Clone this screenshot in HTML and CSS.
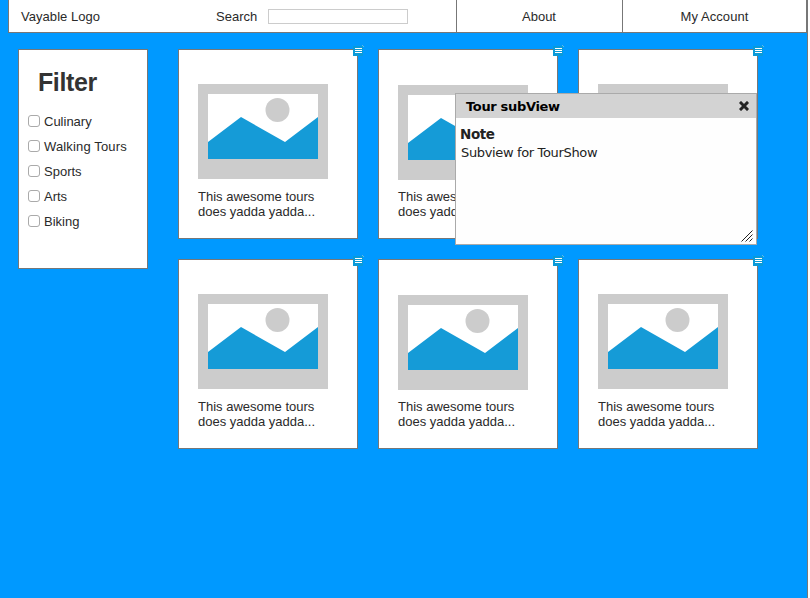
FILE: index.html
```html
<!DOCTYPE html>
<html lang="en">
<head>
<meta charset="utf-8">
<title>Vayable</title>
<link rel="stylesheet" href="styles.css">
</head>
<body>
<svg class="defs" width="0" height="0" aria-hidden="true">
  <symbol id="picture" viewBox="0 0 130 95">
    <path fill="#ccc" d="M0 0h130v95H0z"/>
    <path fill="#fff" d="M10 10h110v65H10z"/>
    <circle cx="79.5" cy="26" r="12" fill="#ccc"/>
    <path fill="#159bd7" d="M10 58 43 33 87 58 120 33V75H10z"/>
  </symbol>
  <symbol id="note" viewBox="0 0 11 11">
    <path fill="#0a9bd8" d="M0 1h9l1 1v9H0z"/>
    <path fill="#5bbce8" d="M9 0h1v1H9zM10 1h1v1h-1z"/>
    <path fill="#fff" d="M2 3h7v1H2zM2 5h7v1H2zM2 7h7v1H2z"/>
  </symbol>
</svg>
<div class="page">
  <header class="topbar">
    <div class="main">
      <span class="logo">Vayable Logo</span>
      <label class="search">Search <input type="text" class="search-box"></label>
    </div>
    <a class="about">About</a>
    <a class="account">My Account</a>
  </header>
  <div class="content">
    <aside class="filter">
      <h1>Filter</h1>
      <label><input type="checkbox">Culinary</label>
      <label><input type="checkbox"><span class="wide">Walking Tours</span></label>
      <label><input type="checkbox">Sports</label>
      <label><input type="checkbox">Arts</label>
      <label><input type="checkbox">Biking</label>
    </aside>
    <main class="tours">
      <article class="card"><svg class="badge"><use href="#note"/></svg><svg class="pic"><use href="#picture"/></svg><p>This awesome tours<br>does yadda yadda...</p></article>
      <article class="card mid"><svg class="badge"><use href="#note"/></svg><svg class="pic"><use href="#picture"/></svg><p>This awesome tours<br>does yadda yadda...</p></article>
      <article class="card"><svg class="badge"><use href="#note"/></svg><svg class="pic"><use href="#picture"/></svg><p>This awesome tours<br>does yadda yadda...</p></article>
      <article class="card"><svg class="badge"><use href="#note"/></svg><svg class="pic"><use href="#picture"/></svg><p>This awesome tours<br>does yadda yadda...</p></article>
      <article class="card mid"><svg class="badge"><use href="#note"/></svg><svg class="pic"><use href="#picture"/></svg><p>This awesome tours<br>does yadda yadda...</p></article>
      <article class="card"><svg class="badge"><use href="#note"/></svg><svg class="pic"><use href="#picture"/></svg><p>This awesome tours<br>does yadda yadda...</p></article>
    </main>
  </div>
  <section class="popup">
    <div class="popup-head"><strong>Tour subView</strong>
      <svg class="close" viewBox="0 0 10 10"><path d="M2 2l6 6M8 2l-6 6" stroke="#222" stroke-width="3" stroke-linecap="square"/></svg>
    </div>
    <h2>Note</h2>
    <p>Subview for TourShow</p>
    <svg class="grip" viewBox="0 0 12 12"><path d="M.5 11.5l11-11M4.5 11.5l7-7M8.5 11.5l3-3" stroke="#222"/></svg>
  </section>
</div>
</body>
</html>
```

FILE: styles.css
```css
* { box-sizing: border-box; }

body {
  margin: 0;
  overflow: hidden;
  background: #fff;
  color: #2a2a2a;
  font: 13px/15px "Liberation Sans", Arial, sans-serif;
}

.defs { position: absolute; }

.page {
  position: relative;
  width: 808px;
  height: 598px;
  background: #09f;
  border-right: 1px solid #777;
}

.topbar {
  display: flex;
  width: 799px;
  height: 33px;
  margin-left: 8px;
  background: #fff;
  border: 1px solid #777;
  border-top: 0;
}

.main { display: flex; align-items: center; width: 447px; padding-left: 12px; }
.logo { width: 195px; letter-spacing: 0.05px; }
.search { display: flex; align-items: center; gap: 11px; }

.search-box {
  width: 140px;
  height: 15px;
  padding: 0;
  border: 1px solid #ccc;
  background: #fff;
}

.about, .account {
  display: flex;
  align-items: center;
  justify-content: center;
  border-left: 1px solid #777;
}
.about { width: 166px; padding-right: 1px; }
.account { flex: 1; letter-spacing: 0.08px; }

.content { display: flex; gap: 30px; padding: 16px 0 0 18px; }

.filter {
  width: 130px;
  height: 220px;
  padding: 18px 0 0 9px;
  background: #fff;
  border: 1px solid #777;
}
.filter h1 {
  margin: 0 0 13px 10px;
  color: #333;
  font-size: 25px;
  line-height: 28px;
  letter-spacing: -0.4px;
}
.filter label { display: flex; align-items: center; height: 25px; }
.wide { letter-spacing: 0.15px; }

.filter input {
  appearance: none;
  width: 12px;
  height: 12px;
  margin: 0 4px 2px 0;
  background: #fff;
  border: 1px solid #aaa;
  border-radius: 3px;
}

.tours { display: grid; grid-template-columns: repeat(3, 180px); gap: 20px; }

.card {
  position: relative;
  height: 190px;
  padding: 34px 0 0 19px;
  background: #fff;
  border: 1px solid #777;
}
.card p { margin: 10px 0 0; }
.pic { display: block; width: 130px; height: 95px; }
.mid .pic { margin-top: 1px; }
.card.mid p { margin-top: 9px; }

.badge {
  position: absolute;
  top: -5px;
  right: -7px;
  width: 11px;
  height: 11px;
  shape-rendering: crispEdges;
}

.popup {
  position: absolute;
  top: 93px;
  left: 455px;
  width: 302px;
  height: 152px;
  background: #fefefe;
  border: 1px solid #aaa;
  color: #222;
  font-family: "DejaVu Sans", sans-serif;
}

.popup-head {
  display: flex;
  align-items: center;
  justify-content: space-between;
  height: 24px;
  padding: 0 7px 0 10px;
  background: #d3d3d3;
  color: #000;
  letter-spacing: -0.33px;
}

.close { width: 10px; height: 10px; }
.popup h2 { margin: 8px 0 0 4px; font-size: 13.5px; line-height: 16px; letter-spacing: -0.4px; }
.popup p { margin: 3px 0 0 5px; letter-spacing: -0.35px; }
.grip { position: absolute; right: 3px; bottom: 2px; width: 12px; height: 12px; }
```
